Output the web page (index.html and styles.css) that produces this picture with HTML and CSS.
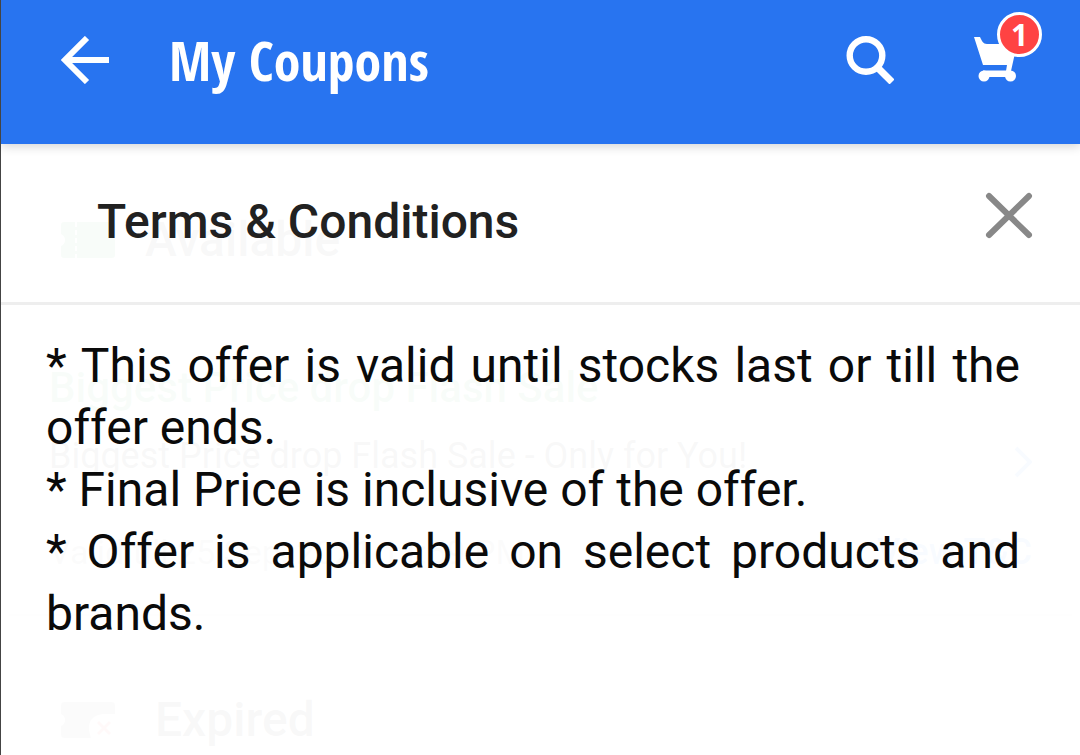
FILE: index.html
```html
<!DOCTYPE html>
<html lang="en">
<head>
  <meta charset="UTF-8" />
  <meta name="viewport" content="width=device-width, initial-scale=1.0" />
  <title>My Coupons</title>
  <link rel="stylesheet" href="styles.css">
</head>
<body>
  <header class="top-bar">
    <button type="button" class="icon-btn" aria-label="Back">
      <svg width="48" height="48" viewBox="0 0 48 48" fill="none" stroke="#fff" stroke-width="6">
        <path d="M48 24H4M26 2L4 24l22 22" />
      </svg>
    </button>
    <h1>My Coupons</h1>
    <button type="button" class="icon-btn" aria-label="Search">
      <svg width="48" height="48" viewBox="0 0 48 48" fill="none" stroke="#fff">
        <circle cx="20" cy="19.500" r="16.300" stroke-width="6.400" />
        <path d="M31 31L46 46" stroke-width="7" />
      </svg>
    </button>
    <button type="button" class="icon-btn cart-btn" aria-label="Cart, 1 item">
      <svg width="48" height="48" viewBox="0 0 48 48" fill="#fff">
        <path d="M0 1H6C8 5 9 8 13 8H43L37 35H32L33 29H9Z" />
        <path d="M9 34.500H37V41H9Z" />
        <circle cx="10" cy="40" r="5.500" />
        <circle cx="36.500" cy="40" r="5.500" />
      </svg>
      <span class="badge">1</span>
    </button>
  </header>

  <main>
    <section class="coupons" aria-hidden="true">
      <div class="group-title">
        <svg width="54" height="36" viewBox="0 0 54 36">
          <path d="M3 0H51Q54 0 54 3V33Q54 36 51 36H3Q0 36 0 33V24Q4 22 4 18T0 12V3Q0 0 3 0Z" fill="#26a541" />
          <path d="M15 0V36" stroke="#fff" stroke-width="2" stroke-dasharray="5 3" />
        </svg>
        <h3>Available</h3>
      </div>
      <article class="coupon">
        <h4>Biggest Price drop Flash Sale</h4>
        <div class="coupon-row">
          <p>Biggest Price drop Flash Sale - Only for You!</p>
          <svg width="18" height="32" viewBox="0 0 18 32" fill="none" stroke="#2874f0" stroke-width="4">
            <path d="M2 2L16 16L2 30" />
          </svg>
        </div>
        <div class="coupon-row coupon-foot">
          <p>Valid till 25 Sep, 2021 11:59 PM</p>
          <span class="view-link">View T&amp;C</span>
        </div>
      </article>
      <div class="group-title expired">
        <svg width="54" height="36" viewBox="0 0 54 36">
          <path d="M3 0H51Q54 0 54 3V12H42Q27 14 28 28L30 36H3Q0 36 0 33V24Q4 22 4 18T0 12V3Q0 0 3 0Z" fill="#878787" />
          <path d="M37 20L49 32M49 20L37 32" stroke="#ff4343" stroke-width="3" />
        </svg>
        <h3>Expired</h3>
      </div>
    </section>

    <section class="terms" role="dialog" aria-labelledby="terms-title">
      <div class="terms-head">
        <h2 id="terms-title">Terms &amp; Conditions</h2>
        <button type="button" class="icon-btn" aria-label="Close">
          <svg width="48" height="48" viewBox="0 0 48 48" fill="none" stroke="#888" stroke-width="6" stroke-linecap="round">
            <path d="M4 4L44 43M44 4L4 43" />
          </svg>
        </button>
      </div>
      <div class="terms-body">
        <p>* This offer is valid until stocks last or till the offer ends.</p>
        <p>* Final Price is inclusive of the offer.</p>
        <p>* Offer is applicable on select products and brands.</p>
      </div>
    </section>
  </main>
</body>
</html>
```
FILE: styles.css
```css
* {
  box-sizing: border-box;
}

body {
  margin: 0;
  min-height: 100vh;
  display: flex;
  flex-direction: column;
  border-left: 1px solid #444;
  background-color: #fff;
  font-family: Roboto, sans-serif;
}

h1,
h2,
h3,
h4,
p {
  margin: 0;
}

.icon-btn {
  padding: 0;
  border: none;
  background: none;
  cursor: pointer;
}

.icon-btn svg {
  display: block;
}

/* top bar */
.top-bar {
  position: relative;
  z-index: 2;
  display: flex;
  align-items: center;
  height: 144px;
  padding: 0 58px 24px 60px;
  background-color: #2874f0;
  box-shadow: 0 2px 10px rgba(0, 0, 0, 0.18);
}

.top-bar h1 {
  flex: 1;
  margin-left: 60px;
  font-family: "Open Sans Condensed", "Open Sans", sans-serif;
  font-size: 54px;
  line-height: 72px;
  font-weight: 700;
  color: #fff;
}

.cart-btn {
  position: relative;
  margin-left: 80px;
}

.badge {
  position: absolute;
  top: -24px;
  right: -20px;
  width: 45px;
  height: 45px;
  border: 3px solid #fff;
  border-radius: 50%;
  background-color: #ff4343;
  color: #fff;
  font-family: "Open Sans", sans-serif;
  font-size: 30px;
  font-weight: 700;
  line-height: 40px;
  text-align: center;
}

main {
  position: relative;
  flex: 1;
}

/* coupon list, faded by the terms panel */
.coupons {
  padding-top: 68px;
}

.group-title {
  display: flex;
  align-items: center;
  gap: 30px;
  padding: 0 60px;
}

.group-title h3 {
  font-size: 48px;
  line-height: 56px;
  font-weight: 500;
  color: #212121;
}

.coupon {
  margin: 0 8px;
  padding: 96px 40px 40px;
  border-bottom: 2px solid #e0e0e0;
}

.coupon h4 {
  font-size: 42px;
  line-height: 48px;
  font-weight: 500;
  color: #26a541;
}

.coupon-row {
  display: flex;
  align-items: flex-end;
  justify-content: space-between;
  margin-top: 22px;
  font-size: 36px;
  line-height: 44px;
  color: #212121;
}

.coupon-foot {
  margin-top: 52px;
  color: #878787;
}

.coupon-foot p {
  font-size: 34px;
}

.view-link {
  color: #2874f0;
  font-weight: 500;
}

.expired {
  gap: 40px;
  padding-top: 76px;
}

/* terms panel */
.terms {
  position: absolute;
  inset: 0;
  background-color: rgba(255, 255, 255, 0.97);
}

.terms-head {
  display: flex;
  align-items: center;
  justify-content: space-between;
  padding: 48px 47px 50px 96px;
  border-bottom: 3px solid #eee;
}

.terms-head h2 {
  font-size: 48px;
  line-height: 60px;
  font-weight: 500;
  color: #212121;
}

.terms-head .icon-btn {
  align-self: flex-start;
}

.terms-body {
  padding: 30px 60px 30px 45px;
  font-size: 48px;
  line-height: 62px;
  color: #0a0a0a;
  text-align: justify;
}
```
